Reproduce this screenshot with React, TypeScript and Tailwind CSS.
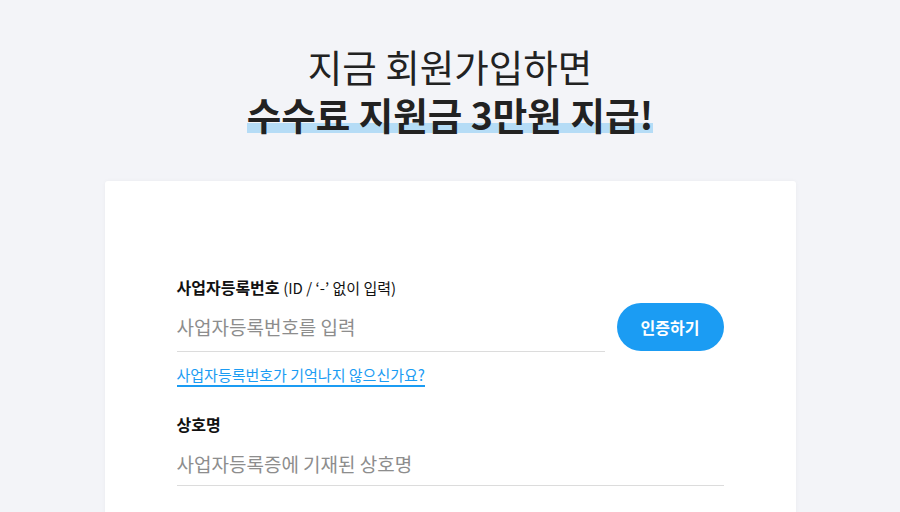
export default function App() {
  return (
    <div
      className="min-h-[512px] bg-[#f3f4f8] text-[#222]"
      style={{ fontFamily: '"Noto Sans CJK KR", "Noto Sans", sans-serif' }}
    >
      <div className="pt-[42px] text-center">
        <p className="text-[37.5px] leading-[48px]">지금 회원가입하면</p>
        <p className="text-[37.5px] leading-[48px] font-bold">
          <span className="inline-block bg-[linear-gradient(transparent_69%,#b5dcf6_69%,#b5dcf6_90%,transparent_90%)]">
            수수료 지원금 3만원 지급!
          </span>
        </p>
      </div>

      <div className="mx-auto mt-[43px] w-[691px] rounded-t-[3px] bg-white px-[72px] pt-[95px] pb-10 shadow-[0_0_4px_rgba(0,0,0,0.04)]">
        <label className="block text-[16px] leading-[22px] text-[#111]">
          <span className="font-bold">사업자등록번호</span>{" "}
          <span className="text-[15px]">(ID / ‘-’ 없이 입력)</span>
        </label>

        <div className="mt-[3px] flex items-center gap-3">
          <input
            className="h-[50px] flex-1 border-b border-[#dcdcdc] bg-transparent text-[19px] outline-none placeholder:text-[#8d8d8d]"
            placeholder="사업자등록번호를 입력"
          />
          <button className="h-12 w-[107px] rounded-full bg-[#1b9cf3] text-[16px] font-bold text-white">
            인증하기
          </button>
        </div>

        <a className="mt-[13px] inline-block border-b-2 border-[#1b9cf3] text-[15px] leading-[20px] text-[#1b9cf3]">
          사업자등록번호가 기억나지 않으신가요?
        </a>

        <label className="mt-[26px] block text-[16px] font-bold leading-[22px] text-[#111]">상호명</label>
        <input
          className="mt-[6px] h-[45px] w-full border-b border-[#dcdcdc] bg-transparent text-[19px] outline-none placeholder:text-[#8d8d8d]"
          placeholder="사업자등록증에 기재된 상호명"
        />
      </div>
    </div>
  )
}
